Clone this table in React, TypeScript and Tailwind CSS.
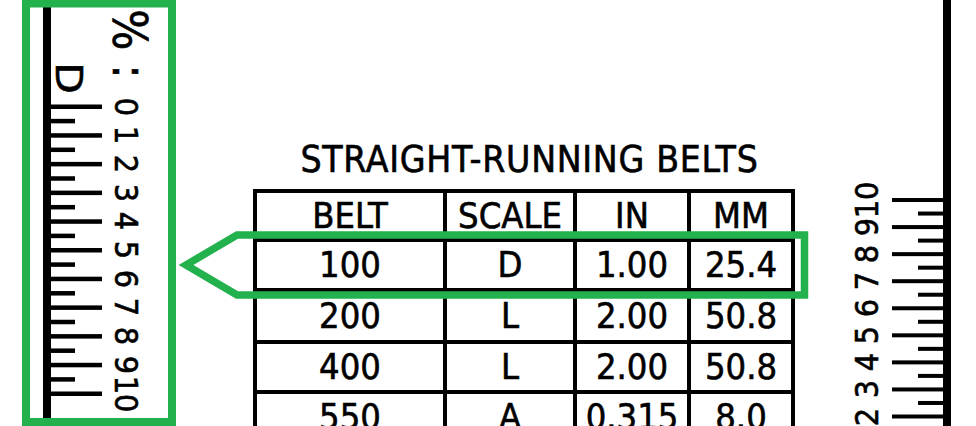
import React from "react";

const FONT =
  "font-['DejaVu_Sans_Condensed','DejaVu_Sans',sans-serif] [font-stretch:condensed] [-webkit-text-stroke:0.6px_#000]";

const LEFT_TICK0 = 106.5;
const LEFT_STEP = 28.7;
const RIGHT_TICK2 = 416.5;
const RIGHT_STEP = 27.06;

function Rot({
  x,
  y,
  cw,
  className,
  children,
}: {
  x: number;
  y: number;
  cw: boolean;
  className: string;
  children: React.ReactNode;
}) {
  return (
    <span
      className={`absolute -translate-x-1/2 -translate-y-1/2 leading-none whitespace-nowrap text-black ${
        cw ? "rotate-90" : "-rotate-90"
      } ${className}`}
      style={{ left: x, top: y }}
    >
      {children}
    </span>
  );
}

function LeftRuler() {
  const longs = Array.from({ length: 11 }, (_, i) => LEFT_TICK0 + i * LEFT_STEP);
  const shorts = Array.from({ length: 10 }, (_, i) => LEFT_TICK0 + (i + 0.5) * LEFT_STEP);
  return (
    <div className="relative w-[176px] h-full shrink-0">
      <svg className="absolute inset-0" width="176" height="426">
        <rect x="43" y="0" width="8" height="426" fill="#000" />
        {longs.map((y, i) => (
          <rect key={`l${i}`} x="51" y={y - 2} width="51" height="4.5" fill="#000" />
        ))}
        {shorts.map((y, i) => (
          <rect key={`s${i}`} x="51" y={y - 2} width="24" height="4.5" fill="#000" />
        ))}
      </svg>
      <Rot x={130} y={43.5} cw className="text-[48px]">
        %<span className="ml-[14px]">:</span>
      </Rot>
      <Rot x={69} y={77.5} cw className="text-[38px] scale-x-[1.2] [font-stretch:normal]">
        D
      </Rot>
      {longs.map((y, i) => (
        <Rot key={`d${i}`} x={126} y={y} cw className="text-[32px]">
          {i}
        </Rot>
      ))}
    </div>
  );
}

function RightRuler() {
  const longs = Array.from({ length: 11 }, (_, i) => ({
    n: i,
    y: RIGHT_TICK2 - (i - 2) * RIGHT_STEP,
  }));
  const shorts = Array.from({ length: 10 }, (_, i) => RIGHT_TICK2 - (i + 0.5 - 2) * RIGHT_STEP);
  return (
    <div className="relative w-[136px] h-full shrink-0">
      <svg className="absolute inset-0" width="136" height="426">
        <rect x="103" y="0" width="8" height="426" fill="#000" />
        {longs.map((t) => (
          <rect key={`l${t.n}`} x="52" y={t.y - 2} width="51" height="4" fill="#000" />
        ))}
        {shorts.map((y, i) => (
          <rect key={`s${i}`} x="78" y={y - 2} width="25" height="4" fill="#000" />
        ))}
      </svg>
      {longs.map((t) => (
        <Rot key={`d${t.n}`} x={27} y={t.y} cw={false} className="text-[32px]">
          {t.n}
        </Rot>
      ))}
    </div>
  );
}

const HEAD = ["BELT", "SCALE", "IN", "MM"];
const ROWS = [
  { h: "h-[50px]", c: ["100", "D", "1.00", "25.4"] },
  { h: "h-[52px]", c: ["200", "L", "2.00", "50.8"] },
  { h: "h-[50px]", c: ["400", "L", "2.00", "50.8"] },
  { h: "h-[50px]", c: ["550", "A", "0.315", "8.0"] },
];

function Cell({ h, children }: { h: string; children: React.ReactNode }) {
  return (
    <div
      className={`flex items-center justify-center border-r-4 border-b-4 border-black text-[36px] leading-none text-black ${h}`}
    >
      {children}
    </div>
  );
}

export default function App() {
  return (
    <div className={`relative flex w-[976px] h-[426px] overflow-hidden bg-white ${FONT}`}>
      <LeftRuler />
      <div className="flex-1 pt-[141px] pl-[77px]">
        <div className="w-[542px]">
          <div className="pl-[11px] text-center text-[37px] leading-none tracking-[0.7px] text-black whitespace-nowrap">
            STRAIGHT-RUNNING BELTS
          </div>
          <div className="mt-[11px] grid grid-cols-[190px_130px_114px_104px] border-l-4 border-t-4 border-black">
            {HEAD.map((t) => (
              <Cell key={t} h="h-[49px]">
                {t}
              </Cell>
            ))}
            {ROWS.map((r, ri) =>
              r.c.map((t, ci) => (
                <Cell key={`${ri}-${ci}`} h={r.h}>
                  {t}
                </Cell>
              ))
            )}
          </div>
        </div>
      </div>
      <RightRuler />
      <svg
        className="absolute inset-0 pointer-events-none"
        width="976"
        height="426"
      >
        <rect x="26" y="3.5" width="146" height="418.5" fill="none" stroke="#22b14c" strokeWidth="8" />
        <polygon
          points="237,235 804.5,235 804.5,295 237,295 186,265"
          fill="none"
          stroke="#22b14c"
          strokeWidth="7.5"
          strokeLinejoin="miter"
        />
      </svg>
    </div>
  );
}
